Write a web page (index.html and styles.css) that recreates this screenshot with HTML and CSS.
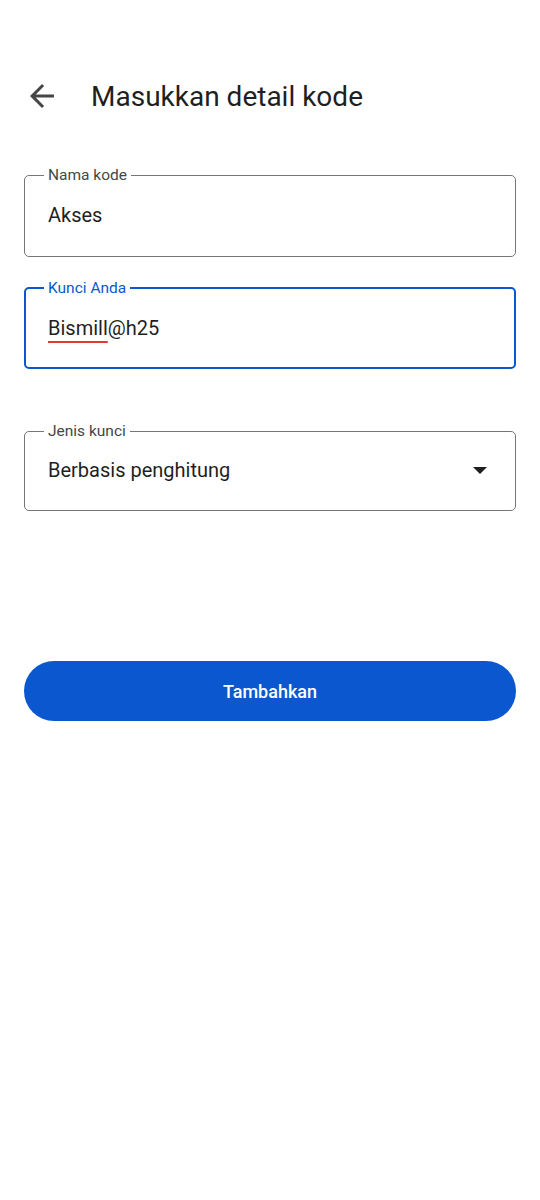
FILE: index.html
```html
<!doctype html>
<html lang="id">
<head>
    <meta charset="UTF-8">
    <meta name="viewport" content="width=device-width, initial-scale=1.0">
    <title>Masukkan detail kode</title>
    <link rel="stylesheet" href="styles.css">
</head>
<body>
    <!-- Top bar -->
    <header class="top-bar">
        <button class="back-btn" aria-label="Kembali">
            <svg width="36" height="36" viewBox="0 0 24 24">
                <path d="M20 11H7.83l5.59-5.59L12 4l-8 8 8 8 1.41-1.41L7.83 13H20v-2z" fill="#444746"/>
            </svg>
        </button>
        <h1 class="title">Masukkan detail kode</h1>
    </header>

    <!-- Form -->
    <main class="form">
        <fieldset class="field">
            <legend class="field-label">Nama kode</legend>
            <div class="field-value">Akses</div>
        </fieldset>

        <fieldset class="field field-focus">
            <legend class="field-label">Kunci Anda</legend>
            <div class="field-value"><span class="misspelled">Bismill</span>@h25</div>
        </fieldset>

        <fieldset class="field field-select">
            <legend class="field-label">Jenis kunci</legend>
            <div class="field-value">
                <span>Berbasis penghitung</span>
                <span class="caret"></span>
            </div>
        </fieldset>

        <button class="add-btn">Tambahkan</button>
    </main>
</body>
</html>
```

FILE: styles.css
```css
* {
    box-sizing: border-box;
}

body {
    margin: 0;
    background: #fff;
    color: #1f1f1f;
    font-family: Roboto, 'Noto Sans', sans-serif;
    width: 540px;
    height: 1200px;
}

/* Top bar */
.top-bar {
    display: flex;
    align-items: center;
    height: 36px;
    margin-top: 78px;
    padding-left: 24px;
}

.back-btn {
    border: none;
    background: none;
    padding: 0;
    width: 36px;
    height: 36px;
    display: flex;
}

.title {
    margin: 0 0 0 31px;
    font-size: 28px;
    font-weight: 400;
    color: #1f1f1f;
}

/* Form */
.form {
    padding: 0 24px;
    margin-top: 53px;
    display: flex;
    flex-direction: column;
}

.field {
    margin: 0;
    border: 1px solid #747775;
    border-radius: 5px;
    padding: 0 20px 0 23px;
    height: 90px;
    min-width: 0;
}

.field + .field {
    margin-top: 23px;
}

.field-select {
    margin-top: 54px !important;
    height: 88px;
}

.field-label {
    margin-left: -4px;
    padding: 0 4px;
    font-size: 15.5px;
    line-height: 16px;
    color: #444746;
}

.field-value {
    height: 56px;
    margin-top: 4px;
    line-height: 56px;
    font-size: 20px;
    color: #1f1f1f;
}

.field-select .field-value {
    display: flex;
    align-items: center;
    justify-content: space-between;
    margin-top: 3px;
}

.field-focus {
    border: 2px solid #0b57d0;
    padding-left: 22px;
    height: 89px;
}

.field-focus .field-label {
    color: #0b57d0;
}

.misspelled {
    text-decoration: underline;
    text-decoration-color: #e53935;
    text-decoration-thickness: 2px;
    text-underline-offset: 6px;
}

.caret {
    width: 0;
    height: 0;
    border-left: 7px solid transparent;
    border-right: 7px solid transparent;
    border-top: 7px solid #1f1f1f;
    margin-right: 8px;
}

.add-btn {
    margin-top: 150px;
    height: 60px;
    border: none;
    border-radius: 30px;
    background: #0b57d0;
    color: #fff;
    font-family: Roboto, 'Noto Sans', sans-serif;
    font-size: 18px;
    font-weight: 500;
}
```
